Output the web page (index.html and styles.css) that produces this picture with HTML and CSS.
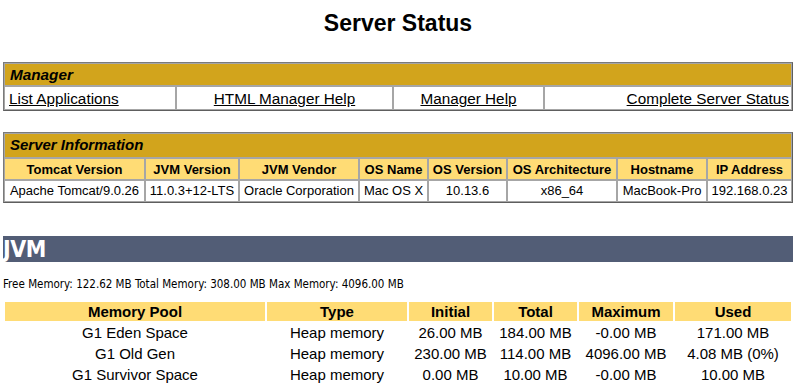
FILE: index.html
```html
<!DOCTYPE html>
<html>
<head>
<meta charset="utf-8">
<title>Server Status</title>
<link rel="stylesheet" href="styles.css">
</head>
<body>
<h1 class="page-title">Server Status</h1>

<table class="box manager">
  <colgroup>
    <col class="m1"><col class="m2"><col class="m3"><col class="m4">
  </colgroup>
  <tr><td colspan="4" class="title">Manager</td></tr>
  <tr>
    <td class="row-left"><a href="#">List Applications</a></td>
    <td class="row-center"><a href="#">HTML Manager Help</a></td>
    <td class="row-center"><a href="#">Manager Help</a></td>
    <td class="row-right"><a href="#">Complete Server Status</a></td>
  </tr>
</table>

<table class="box info">
  <colgroup>
    <col class="s1"><col class="s2"><col class="s3"><col class="s4"><col class="s5"><col class="s6"><col class="s7"><col class="s8">
  </colgroup>
  <tr><td colspan="8" class="title">Server Information</td></tr>
  <tr>
    <td class="header-center">Tomcat Version</td>
    <td class="header-center">JVM Version</td>
    <td class="header-center">JVM Vendor</td>
    <td class="header-center">OS Name</td>
    <td class="header-center">OS Version</td>
    <td class="header-center">OS Architecture</td>
    <td class="header-center">Hostname</td>
    <td class="header-center">IP Address</td>
  </tr>
  <tr>
    <td class="row-center">Apache Tomcat/9.0.26</td>
    <td class="row-center">11.0.3+12-LTS</td>
    <td class="row-center">Oracle Corporation</td>
    <td class="row-center">Mac OS X</td>
    <td class="row-center">10.13.6</td>
    <td class="row-center">x86_64</td>
    <td class="row-center">MacBook-Pro</td>
    <td class="row-center">192.168.0.23</td>
  </tr>
</table>

<h2 class="section">JVM</h2>
<p class="mem">Free Memory: 122.62 MB Total Memory: 308.00 MB Max Memory: 4096.00 MB</p>

<table class="pools">
  <colgroup>
    <col class="p1"><col class="p2"><col class="p3"><col class="p4"><col class="p5"><col class="p6">
  </colgroup>
  <thead>
    <tr><th>Memory Pool</th><th>Type</th><th>Initial</th><th>Total</th><th>Maximum</th><th>Used</th></tr>
  </thead>
  <tbody>
    <tr><td>G1 Eden Space</td><td>Heap memory</td><td>26.00 MB</td><td>184.00 MB</td><td>-0.00 MB</td><td>171.00 MB</td></tr>
    <tr><td>G1 Old Gen</td><td>Heap memory</td><td>230.00 MB</td><td>114.00 MB</td><td>4096.00 MB</td><td>4.08 MB (0%)</td></tr>
    <tr><td>G1 Survivor Space</td><td>Heap memory</td><td>0.00 MB</td><td>10.00 MB</td><td>-0.00 MB</td><td>10.00 MB</td></tr>
  </tbody>
</table>
</body>
</html>
```

FILE: styles.css
```css
html, body {
  margin: 0;
  padding: 0;
  background: #ffffff;
}
body {
  padding: 0 7px 0 3px;
  font-family: "Liberation Sans", Arial, sans-serif;
  font-size: 15px;
  color: #000;
}
.page-title {
  margin: 0;
  padding-top: 9px;
  height: 53px;
  box-sizing: border-box;
  text-align: center;
  font-size: 23px;
  line-height: 28px;
  font-weight: bold;
}
.box {
  width: 100%;
  table-layout: fixed;
  border-collapse: separate;
  border-spacing: 0;
  border: 1px solid #7a7a7a;
  border-right-color: #5e5e5e;
  border-bottom-color: #5e5e5e;
}
.box td {
  border: 1px solid #a6a6a6;
  padding: 3px;
  line-height: 17px;
  white-space: nowrap;
  overflow: hidden;
}
.manager { margin-top: 9px; }
.manager td { font-size: 15.3px; }
.manager .title { padding: 2px 3px 2px 5px; }
.manager .row-left, .manager .row-right { padding: 3px 2px 2px 4px; }
.manager .row-center { padding: 3px 3px 2px 3px; }
.info { margin-top: 21px; }
.info .header-center {
  font-size: 13px;
  line-height: 15px;
  padding: 3px 3px 2px 3px;
}
.info .row-center {
  font-size: 13px;
  line-height: 15px;
  padding: 2px 3px 3px 3px;
}
.info .title { padding: 2px 3px 4px 5px; line-height: 17px; }
.title {
  background: #D2A41C;
  font-weight: bold;
  font-style: italic;
  text-align: left;
}
.header-center {
  background: #FFDC75;
  font-weight: bold;
  text-align: center;
}
.row-left { text-align: left; }
.row-center { text-align: center; }
.row-right { text-align: right; }
a { color: #000; text-decoration: underline; }

.m1 { width: 172px; }
.m2 { width: 217px; }
.m3 { width: 151px; }
.m4 { width: auto; }

.s1 { width: 141px; }
.s2 { width: 94px; }
.s3 { width: 120px; }
.s4 { width: 69px; }
.s5 { width: 79px; }
.s6 { width: 110px; }
.s7 { width: 90px; }
.s8 { width: auto; }

.section {
  margin: 33px 0 0 0;
  height: 26px;
  background: #525D76;
  color: #ffffff;
  font-family: "DejaVu Sans Condensed", "DejaVu Sans", sans-serif;
  font-weight: bold;
  font-size: 23px;
  line-height: 26px;
  letter-spacing: -0.5px;
  padding: 0;
  overflow: hidden;
}
.mem {
  margin: 14px 0 0 0;
  font-family: "DejaVu Sans Condensed", "DejaVu Sans", sans-serif;
  font-size: 11.5px;
  line-height: 16px;
}
.pools {
  width: 100%;
  margin-top: 8px;
  table-layout: fixed;
  border-collapse: separate;
  border-spacing: 2px;
}
.pools th {
  background: #FFDC75;
  font-weight: bold;
  text-align: center;
  padding: 1px;
  line-height: 17px;
}
.pools td {
  text-align: center;
  padding: 1px;
  line-height: 17px;
  white-space: nowrap;
}
.p1 { width: 260px; }
.p2 { width: 140px; }
.p3 { width: 83px; }
.p4 { width: 83px; }
.p5 { width: 94px; }
.p6 { width: auto; }
```
